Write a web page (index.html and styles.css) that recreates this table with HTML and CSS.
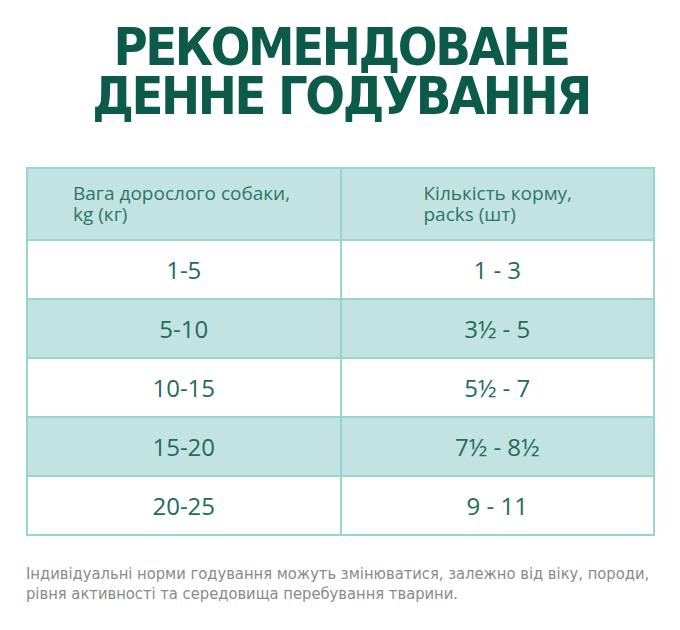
FILE: index.html
```html
<!DOCTYPE html>
<html lang="uk">
<head>
<meta charset="utf-8">
<title>Рекомендоване денне годування</title>
<link rel="stylesheet" href="styles.css">
</head>
<body>
<main class="page">
  <h1 class="title"><span class="title-line">РЕКОМЕНДОВАНЕ</span><span class="title-line">ДЕННЕ ГОДУВАННЯ</span></h1>
  <table class="feed">
    <thead>
      <tr>
        <th><span class="th-line">Вага дорослого собаки,</span><span class="th-line">kg (кг)</span></th>
        <th><span class="th-line">Кількість корму,</span><span class="th-line">packs (шт)</span></th>
      </tr>
    </thead>
    <tbody>
      <tr><td>1-5</td><td>1 - 3</td></tr>
      <tr class="alt"><td>5-10</td><td>3½ - 5</td></tr>
      <tr><td>10-15</td><td>5½ - 7</td></tr>
      <tr class="alt"><td>15-20</td><td>7½ - 8½</td></tr>
      <tr><td>20-25</td><td>9 - 11</td></tr>
    </tbody>
  </table>
  <p class="note"><span class="note-line">Індивідуальні норми годування можуть змінюватися, залежно від віку, породи,</span><span class="note-line">рівня активності та середовища перебування тварини.</span></p>
</main>
</body>
</html>
```

FILE: styles.css
```css
html, body {
  margin: 0;
  padding: 0;
  background: #ffffff;
}
.page {
  width: 680px;
  padding: 23px 0 0 0;
  box-sizing: border-box;
}
.title {
  margin: 0;
  padding-left: 2px;
  text-align: center;
  font-family: "DejaVu Sans Condensed", "DejaVu Sans", sans-serif;
  font-weight: 700;
  font-size: 52px;
  line-height: 49px;
  letter-spacing: -2.4px;
  color: #0b5a4a;
}
.title-line {
  display: block;
}
.feed {
  margin: 46px 0 0 26px;
  width: 629px;
  border-collapse: collapse;
  font-family: "Open Sans", sans-serif;
}
.feed th, .feed td {
  border: 2px solid #98d5cc;
  width: 50%;
}
.feed th {
  background: #c2e3e1;
  height: 72px;
  text-align: left;
  font-weight: 400;
  font-size: 19px;
  line-height: 21px;
  color: #2e7568;
  padding: 0 0 0 45px;
  box-sizing: border-box;
}
.th-line {
  display: block;
}
.feed th + th {
  padding-left: 82px;
}
.feed td {
  height: 59px;
  text-align: center;
  font-size: 24px;
  color: #236b5d;
  box-sizing: border-box;
}
.feed tr.alt td {
  background: #c2e3e1;
}
.note {
  margin: 28px 0 0 26px;
  font-family: "Liberation Sans Narrow", "DejaVu Sans Condensed", sans-serif;
  font-size: 16.4px;
  line-height: 20px;
  color: #8a8a8a;
}
.note-line {
  display: block;
}
```
